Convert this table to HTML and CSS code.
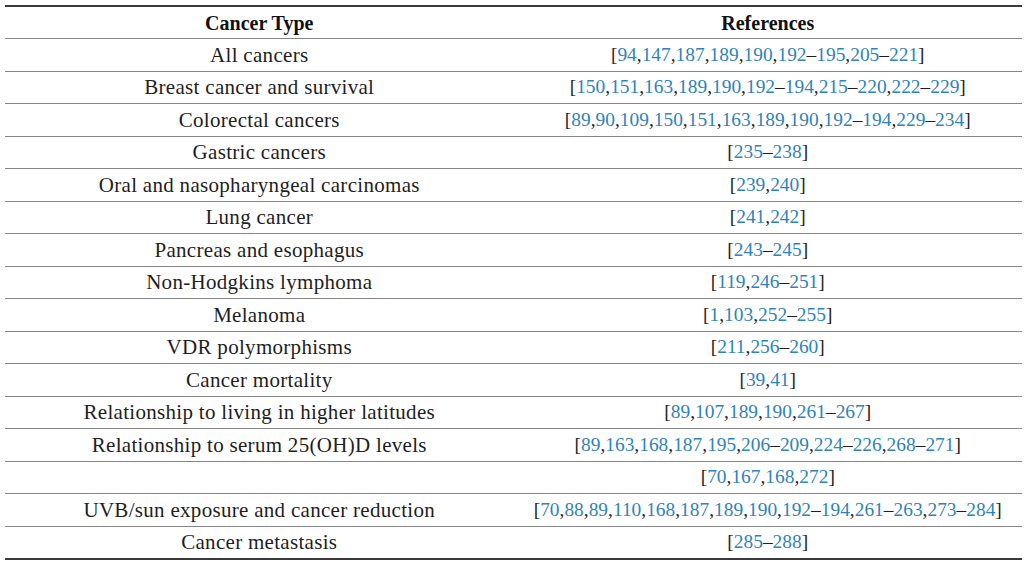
FILE: index.html
```html
<!DOCTYPE html>
<html>
<head>
<meta charset="utf-8">
<link rel="stylesheet" href="styles.css">
</head>
<body>
<table class="refs">
  <thead>
    <tr><th>Cancer Type</th><th>References</th></tr>
  </thead>
  <tbody>
    <tr><td>All cancers</td><td>[<a>94</a>,<a>147</a>,<a>187</a>,<a>189</a>,<a>190</a>,<a>192</a>–<a>195</a>,<a>205</a>–<a>221</a>]</td></tr>
    <tr><td>Breast cancer and survival</td><td>[<a>150</a>,<a>151</a>,<a>163</a>,<a>189</a>,<a>190</a>,<a>192</a>–<a>194</a>,<a>215</a>–<a>220</a>,<a>222</a>–<a>229</a>]</td></tr>
    <tr><td>Colorectal cancers</td><td>[<a>89</a>,<a>90</a>,<a>109</a>,<a>150</a>,<a>151</a>,<a>163</a>,<a>189</a>,<a>190</a>,<a>192</a>–<a>194</a>,<a>229</a>–<a>234</a>]</td></tr>
    <tr><td>Gastric cancers</td><td>[<a>235</a>–<a>238</a>]</td></tr>
    <tr><td>Oral and nasopharyngeal carcinomas</td><td>[<a>239</a>,<a>240</a>]</td></tr>
    <tr><td>Lung cancer</td><td>[<a>241</a>,<a>242</a>]</td></tr>
    <tr><td>Pancreas and esophagus</td><td>[<a>243</a>–<a>245</a>]</td></tr>
    <tr><td>Non-Hodgkins lymphoma</td><td>[<a>119</a>,<a>246</a>–<a>251</a>]</td></tr>
    <tr><td>Melanoma</td><td>[<a>1</a>,<a>103</a>,<a>252</a>–<a>255</a>]</td></tr>
    <tr><td>VDR polymorphisms</td><td>[<a>211</a>,<a>256</a>–<a>260</a>]</td></tr>
    <tr><td>Cancer mortality</td><td>[<a>39</a>,<a>41</a>]</td></tr>
    <tr><td>Relationship to living in higher latitudes</td><td>[<a>89</a>,<a>107</a>,<a>189</a>,<a>190</a>,<a>261</a>–<a>267</a>]</td></tr>
    <tr><td>Relationship to serum 25(OH)D levels</td><td>[<a>89</a>,<a>163</a>,<a>168</a>,<a>187</a>,<a>195</a>,<a>206</a>–<a>209</a>,<a>224</a>–<a>226</a>,<a>268</a>–<a>271</a>]</td></tr>
    <tr><td></td><td>[<a>70</a>,<a>167</a>,<a>168</a>,<a>272</a>]</td></tr>
    <tr><td>UVB/sun exposure and cancer reduction</td><td>[<a>70</a>,<a>88</a>,<a>89</a>,<a>110</a>,<a>168</a>,<a>187</a>,<a>189</a>,<a>190</a>,<a>192</a>–<a>194</a>,<a>261</a>–<a>263</a>,<a>273</a>–<a>284</a>]</td></tr>
    <tr><td>Cancer metastasis</td><td>[<a>285</a>–<a>288</a>]</td></tr>
  </tbody>
</table>
</body>
</html>
```

FILE: styles.css
```css
html, body {
  margin: 0;
  padding: 0;
  background: #ffffff;
}

body {
  padding: 5px 2px 0 5px;
  font-family: "Liberation Serif", "Times New Roman", serif;
  color: #1e1e1e;
}

.refs {
  width: 1017px;
  border-collapse: collapse;
  table-layout: fixed;
  border-top: 2px solid #3a3a3a;
  border-bottom: 2px solid #3a3a3a;
  font-size: 20px;
}

.refs th,
.refs td {
  width: 50%;
  height: 31.5px;
  padding: 0;
  text-align: center;
  vertical-align: middle;
  line-height: 22px;
  border-bottom: 1px solid #858585;
}

.refs td:first-child {
  font-size: 21px;
  letter-spacing: 0.3px;
}

.refs td:last-child {
  font-size: 19.4px;
}

.refs th {
  font-weight: bold;
  height: 31px;
  color: #111;
}

.refs tbody tr:last-child td {
  border-bottom: none;
}

.refs a {
  color: #2e83bb;
  text-decoration: none;
}
```
